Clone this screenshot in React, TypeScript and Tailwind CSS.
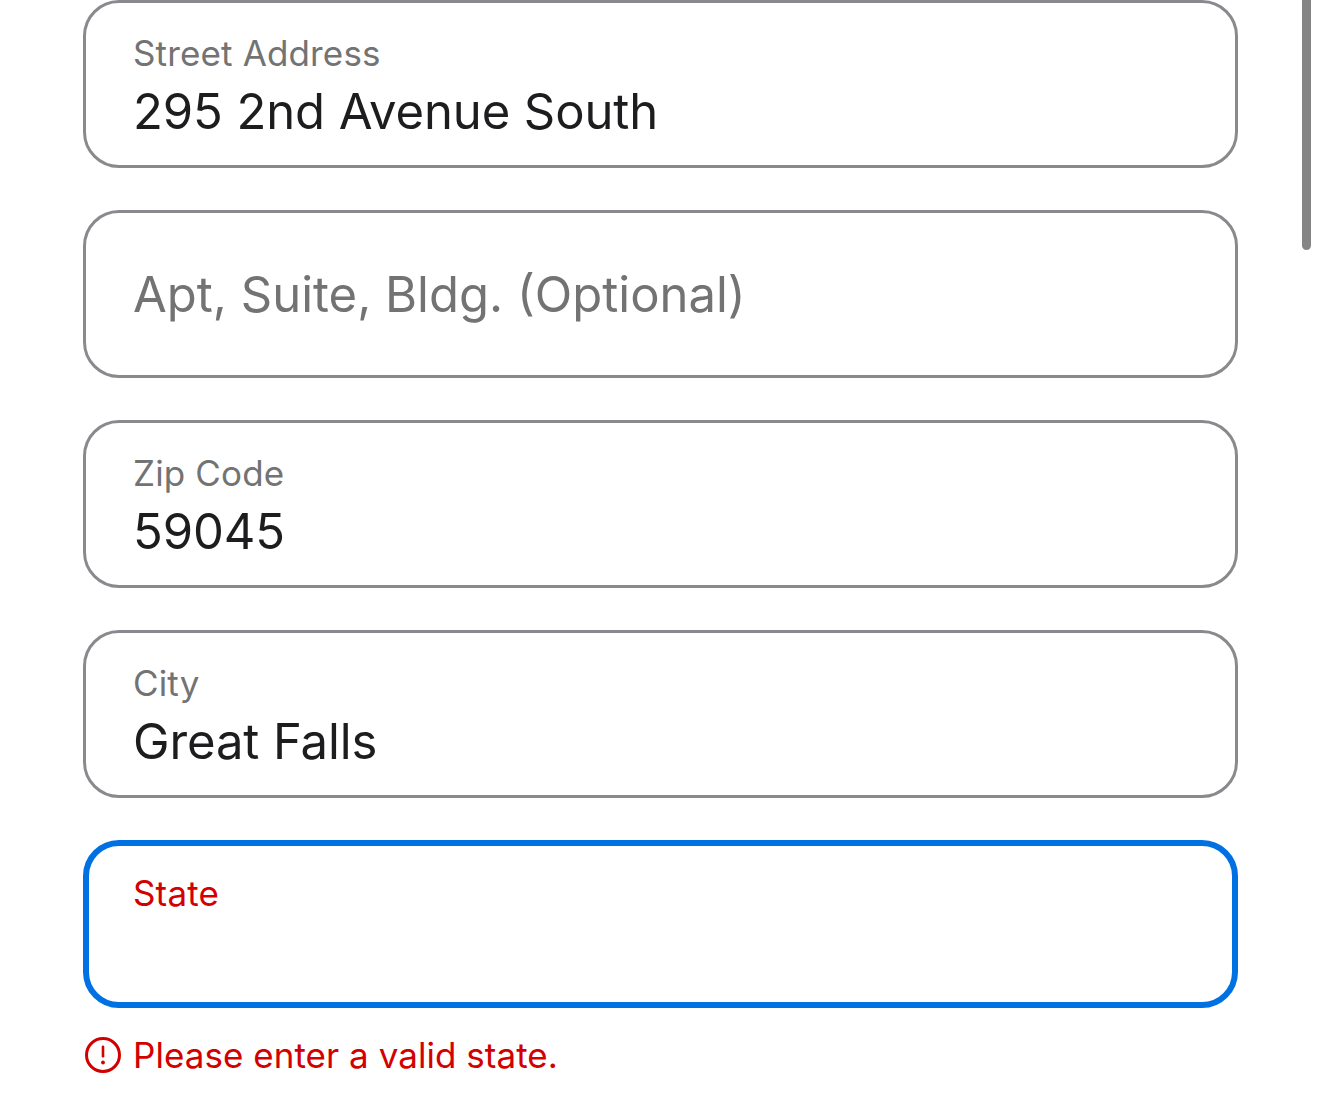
import React from "react";

function Field({ label, value, placeholder }: { label?: string; value?: string; placeholder?: string }) {
  if (placeholder) {
    return (
      <div className="h-[168px] rounded-[36px] border-[3px] border-[#8a8a8e] bg-white pl-[47px] pt-[2px] flex items-center">
        <span className="text-[49px] leading-[60px] text-[#737373]">{placeholder}</span>
      </div>
    );
  }
  return (
    <div className="h-[168px] rounded-[36px] border-[3px] border-[#8a8a8e] bg-white pl-[47px] pt-[30px] flex flex-col">
      <span className="text-[35px] leading-[40px] tracking-[0.15px] text-[#737373]">{label}</span>
      <span className="mt-[9px] text-[49px] leading-[60px] tracking-[-0.1px] text-[#1d1d1f]">{value}</span>
    </div>
  );
}

export default function App() {
  return (
    <div className="relative h-[1118px] w-[1320px] overflow-hidden bg-white font-['Inter','Liberation_Sans',sans-serif]">
      <div className="pl-[83px] pr-[82px] flex flex-col gap-[42px]">
        <Field label="Street Address" value="295 2nd Avenue South" />
        <Field placeholder="Apt, Suite, Bldg. (Optional)" />
        <Field label="Zip Code" value="59045" />
        <Field label="City" value="Great Falls" />
        <div className="h-[168px] rounded-[36px] border-[6px] border-[#0071e3] bg-white pl-[44px] pt-[27px]">
          <span className="block text-[35px] leading-[40px] tracking-[0.15px] text-[#d30000]">State</span>
        </div>
      </div>
      <div className="pl-[83px] mt-[25px] flex items-center gap-[10px]">
        <svg width="40" height="40" viewBox="0 0 40 40" fill="none" className="shrink-0">
          <circle cx="20" cy="20" r="16.5" stroke="#d30000" strokeWidth="3" />
          <rect x="18.7" y="10.5" width="2.6" height="12" rx="1.3" fill="#d30000" />
          <circle cx="20" cy="27.5" r="1.9" fill="#d30000" />
        </svg>
        <span className="text-[35px] leading-[44px] tracking-[0.04px] text-[#d30000]">Please enter a valid state.</span>
      </div>
      <div className="absolute right-[9px] top-0 h-[250px] w-[9px] rounded-b-full bg-[#858585]" />
    </div>
  );
}
